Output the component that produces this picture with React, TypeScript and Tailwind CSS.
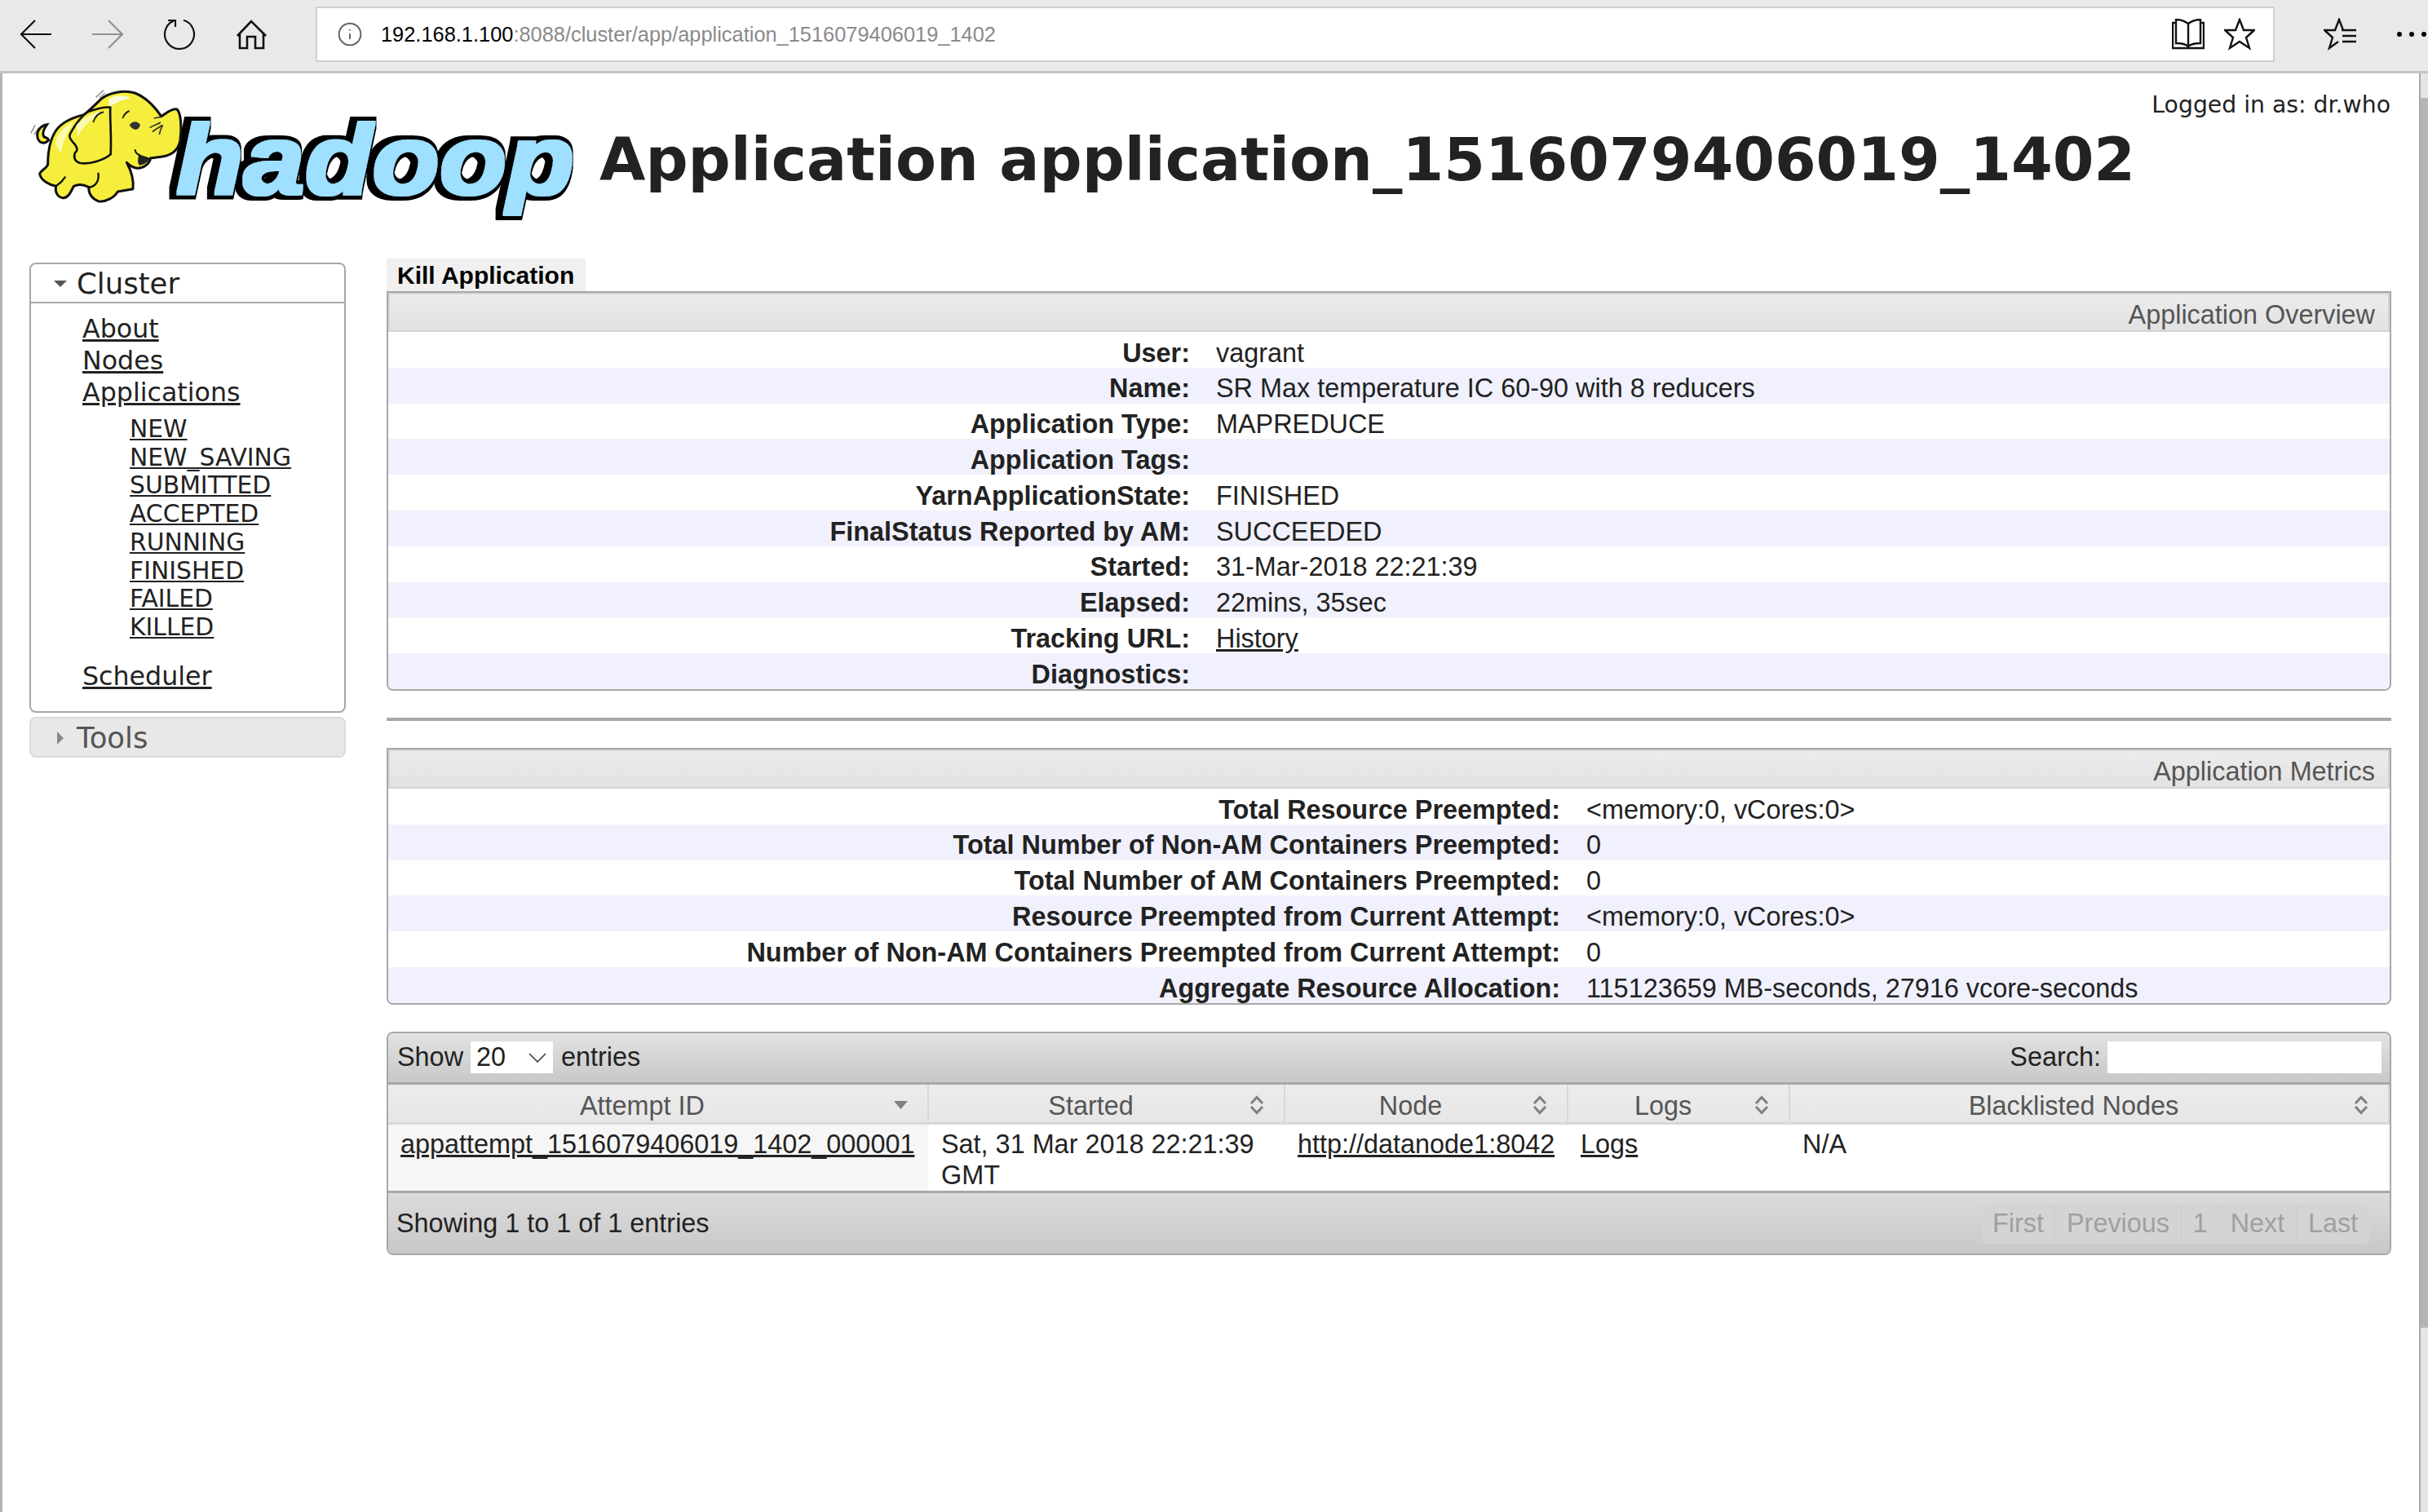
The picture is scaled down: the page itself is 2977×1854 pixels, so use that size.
import { Info } from 'lucide-react';

const overview = [
  ['User:', 'vagrant'],
  ['Name:', 'SR Max temperature IC 60-90 with 8 reducers'],
  ['Application Type:', 'MAPREDUCE'],
  ['Application Tags:', ''],
  ['YarnApplicationState:', 'FINISHED'],
  ['FinalStatus Reported by AM:', 'SUCCEEDED'],
  ['Started:', '31-Mar-2018 22:21:39'],
  ['Elapsed:', '22mins, 35sec'],
  ['Tracking URL:', 'History'],
  ['Diagnostics:', ''],
];

const metrics = [
  ['Total Resource Preempted:', '<memory:0, vCores:0>'],
  ['Total Number of Non-AM Containers Preempted:', '0'],
  ['Total Number of AM Containers Preempted:', '0'],
  ['Resource Preempted from Current Attempt:', '<memory:0, vCores:0>'],
  ['Number of Non-AM Containers Preempted from Current Attempt:', '0'],
  ['Aggregate Resource Allocation:', '115123659 MB-seconds, 27916 vcore-seconds'],
];

const states = ['NEW', 'NEW_SAVING', 'SUBMITTED', 'ACCEPTED', 'RUNNING', 'FINISHED', 'FAILED', 'KILLED'];

const STAR = '19,2 24,15 37,15 27,24 31,37 19,29 7,37 11,24 1,15 14,15';

function HadoopLogo() {
  return (
    <svg width="690" height="170" viewBox="0 0 690 170" className="shrink-0">
      <defs>
        <filter id="wordmark" x="-5%" y="-10%" width="110%" height="120%">
          <feMorphology in="SourceAlpha" operator="dilate" radius="7" result="outer" />
          <feOffset in="outer" dx="-4" dy="0" result="outerShift" />
          <feFlood floodColor="#000000" />
          <feComposite in2="outerShift" operator="in" result="black" />
          <feMorphology in="SourceAlpha" operator="dilate" radius="2" result="inner" />
          <feFlood floodColor="#9fdfff" />
          <feComposite in2="inner" operator="in" result="blue" />
          <feMerge>
            <feMergeNode in="black" />
            <feMergeNode in="blue" />
          </feMerge>
        </filter>
      </defs>
      <text x="186" y="138" fontFamily="Liberation Sans" fontWeight="bold" fontStyle="italic" fontSize="120" textLength="488" lengthAdjust="spacingAndGlyphs" filter="url(#wordmark)">hadoop</text>
      {/* elephant */}
      <g transform="translate(-3 0) scale(0.3333)">
        <path d="M33 190 L48 160 M45 195 L62 170 M272 58 L300 32 M285 60 L305 42" stroke="#999" strokeWidth="5" fill="none" />
        <path d="M98 215 C80 235 58 225 56 198 C56 178 72 160 92 158 C80 175 72 190 80 202 C86 208 94 205 98 215 Z" fill="#f5ee3c" stroke="#111" strokeWidth="9" />
        <path d="M290 65 C320 40 375 30 415 42 C460 60 490 95 512 128 C530 118 550 98 570 102 C585 115 588 170 582 215 C575 258 545 275 500 278 L472 282 C472 300 445 322 420 318 C405 316 395 308 385 298 C400 325 412 360 408 395 L352 405 C340 425 310 445 280 440 C255 430 245 410 245 388 C225 378 205 378 190 385 C180 405 170 430 150 428 C130 425 120 405 125 385 C100 380 70 365 65 340 C70 325 90 320 95 305 C95 260 105 210 125 180 C150 145 195 130 228 122 C250 105 270 85 290 65 Z" fill="#f5ee3c" stroke="#111" strokeWidth="9" strokeLinejoin="round" />
        <path d="M320 62 C345 48 380 48 400 62 C370 65 340 80 320 95 Z" fill="#fbfbd8" />
        <path d="M125 220 C130 190 160 160 190 148 C170 180 150 220 145 260 C130 250 125 240 125 220 Z" fill="#fbfbb0" />
        <path d="M245 110 C275 100 305 92 325 95 C322 130 330 190 326 268 C300 290 250 305 215 300 C195 295 188 280 195 262 C205 255 205 245 195 232 C180 215 170 205 178 190 C195 160 220 125 245 110 Z" fill="#f5ee3c" stroke="#111" strokeWidth="8" strokeLinejoin="round" />
        <path d="M200 160 C230 130 265 112 300 108 C270 125 225 160 205 205 Z" fill="#fbfbb0" />
        <path d="M262 150 C270 125 285 115 300 112 M370 135 C375 122 385 112 395 108" stroke="#222" strokeWidth="6" fill="none" />
        <path d="M395 160 C405 145 425 142 435 160 C430 180 410 185 395 160 Z" fill="#333" />
        <path d="M470 170 C485 160 500 158 510 150 M480 185 C490 175 505 170 515 160 M505 195 C508 180 512 170 518 160 M485 135 L510 130" stroke="#333" strokeWidth="5" fill="none" />
        <path d="M430 268 C426 285 424 300 432 308 C450 305 465 295 472 282 Z" fill="#222" />
        <path d="M415 250 C418 262 425 270 435 270" stroke="#111" strokeWidth="6" fill="none" />
        <path d="M280 335 C285 360 275 385 245 390 M125 385 C140 375 150 365 160 350" stroke="#111" strokeWidth="7" fill="none" />
      </g>
    </svg>
  );
}

export default function App() {
  return (
    <div className="h-[1854px] overflow-hidden bg-white font-['Liberation_Sans',sans-serif] text-[32.4px] text-[#222]">
      {/* BROWSER TOOLBAR */}
      <div className="flex h-[90px] items-center border-b-[3px] border-[#c4c4c4] bg-[#e8eae9] pb-[3px]">
        <div className="flex w-[387px] shrink-0 items-center gap-[44px] pl-[22px]">
          <svg width="44" height="44" viewBox="0 0 44 44" fill="none" stroke="#111" strokeWidth="2.2">
            <path d="M41 22 H4 M21 5 L4 22 L21 39" />
          </svg>
          <svg width="44" height="44" viewBox="0 0 44 44" fill="none" stroke="#909090" strokeWidth="2.2">
            <path d="M3 22 H40 M23 5 L40 22 L23 39" />
          </svg>
          <svg width="44" height="44" viewBox="0 0 44 44" fill="none" stroke="#111" strokeWidth="2.2">
            <path d="M27 4.7 A18 18 0 1 1 15 5.4 M8 5 H17 V13" />
          </svg>
          <svg width="44" height="44" viewBox="0 0 44 44" fill="none" stroke="#111" strokeWidth="2.6">
            <path d="M5 24 L22 6 L40 24 M8 20 V39 H17 V25 H27 V39 H37 V20" />
          </svg>
        </div>
        <div className="flex h-[68px] w-[2402px] shrink-0 items-center border-2 border-[#cfcfcf] bg-white pl-[24px] pr-[22px]">
          <Info size={32} strokeWidth={1.5} className="text-[#666]" />
          <span className="ml-[22px] text-[25.4px] text-black">
            192.168.1.100<span className="text-[#8a8a8a]">:8088/cluster/app/application_1516079406019_1402</span>
          </span>
          <svg className="ml-auto" width="40" height="38" viewBox="0 0 40 38" fill="none" stroke="#111" strokeWidth="2.4">
            <path d="M20 6 C15 2 9 1 5 1 V30 C10 30 16 30 20 34 C24 30 30 30 35 30 V1 C31 1 25 2 20 6 V34 M5 5 H1 V36 H39 V5 H35" />
          </svg>
          <svg className="ml-[24px]" width="38" height="40" viewBox="0 0 38 40" fill="none" stroke="#111" strokeWidth="2.4">
            <polygon points={STAR} />
          </svg>
        </div>
        <svg className="ml-[60px] shrink-0" width="40" height="40" viewBox="0 0 40 40" fill="none" stroke="#111" strokeWidth="2.4">
          <path d="M25 15 H24 L19 2 L14 15 H1 L11 24 L7 37 L18 29 M22 15 H25 M23 22 H40 M23 29 H40 M23 15 H40" />
        </svg>
        <div className="ml-[50px] flex shrink-0 gap-[9px]">
          <span className="h-[6px] w-[6px] rounded-full bg-black" />
          <span className="h-[6px] w-[6px] rounded-full bg-black" />
          <span className="h-[6px] w-[6px] rounded-full bg-black" />
        </div>
      </div>

      <div className="flex h-[1764px] border-l-[3px] border-[#b4b4b4]">
        <div className="relative w-[2963px] shrink-0">
          {/* HEADER */}
          <div className="flex h-[227px] items-start pl-[27px] pt-[10px]">
            <HadoopLogo />
            <h1 className="ml-[15px] mt-[60px] whitespace-nowrap font-['DejaVu_Sans',sans-serif] text-[72.9px] font-bold leading-none text-[#222]">Application application_1516079406019_1402</h1>
          </div>
          <p className="absolute right-[35px] top-[18px] font-['DejaVu_Sans',sans-serif] text-[28.3px]">Logged in as: dr.who</p>

          <div className="flex gap-[50px] pl-[33px] pr-[34px]">
            {/* SIDEBAR */}
            <aside className="w-[388px] shrink-0 pt-[5px] font-['DejaVu_Sans',sans-serif]">
              <div className="h-[552px] rounded-[8px] border-2 border-[#a8a8a8]">
                <div className="flex h-[48px] items-center border-b-2 border-[#a8a8a8] pl-[28px] pt-[2px] text-[35.5px]">
                  <span className="mr-[12px] h-0 w-0 border-x-[8px] border-t-[8px] border-x-transparent border-t-[#555]" />
                  Cluster
                </div>
                <div className="pl-[63px] pt-[12px] text-[31.7px] leading-[39px] underline">
                  <p>About</p>
                  <p>Nodes</p>
                  <p>Applications</p>
                  <ul className="mt-[8px] pl-[58px] text-[29.8px] leading-[34.7px]">
                    {states.map((s) => (
                      <li key={s}>{s}</li>
                    ))}
                  </ul>
                  <p className="mt-[23px]">Scheduler</p>
                </div>
              </div>
              <div className="mt-[5px] flex h-[50px] items-center rounded-[8px] border-2 border-[#dcdcdc] bg-[#e8e8e8] pl-[32px] pt-[2px] text-[35.5px] text-[#555]">
                <span className="mr-[16px] h-0 w-0 border-y-[8px] border-l-[8px] border-y-transparent border-l-[#888]" />
                Tools
              </div>
            </aside>

            <main className="w-[2458px] shrink-0">
              <div className="flex h-[40px] w-[244px] items-center bg-[#f0f0f0] pl-[13px] text-[30px] font-bold text-black">Kill Application</div>
              <Panel title="Application Overview" rows={overview} labelWidth={983} />
              <div className="my-[33px] h-[4px] bg-[#a8a8a8]" />
              <Panel title="Application Metrics" rows={metrics} labelWidth={1437} />

              {/* ATTEMPTS TABLE */}
              <div className="mt-[33px] overflow-hidden rounded-[8px] border-2 border-[#a8a8a8]">
                <div className="flex h-[63px] items-center border-b-[3px] border-[#a8a8a8] bg-gradient-to-b from-[#e2e2e2] to-[#c8c8c8] pl-[11px] pr-[10px]">
                  Show
                  <span className="ml-[9px] mr-[10px] flex h-[39px] w-[101px] items-center justify-between bg-white px-[7px]">
                    20
                    <svg width="24" height="14" viewBox="0 0 24 14">
                      <path d="M2 2 L12 12 L22 2" fill="none" stroke="#333" strokeWidth="1.5" />
                    </svg>
                  </span>
                  entries
                  <span className="ml-auto mr-[8px]">Search:</span>
                  <span className="h-[39px] w-[336px] bg-white" />
                </div>
                <table className="w-full table-fixed border-collapse">
                  <colgroup>
                    <col className="w-[662px]" />
                    <col className="w-[437px]" />
                    <col className="w-[347px]" />
                    <col className="w-[272px]" />
                    <col />
                  </colgroup>
                  <thead>
                    <tr className="h-[48px] bg-gradient-to-b from-[#ececec] to-[#e6e6e6] text-[#555]">
                      {['Attempt ID', 'Started', 'Node', 'Logs', 'Blacklisted Nodes'].map((h, i) => (
                        <th key={h} className="relative border-b-[3px] border-r-2 border-[#d8d8d8] pr-[38px] pt-[5px] font-normal leading-[38px]">
                          {h}
                          <svg className="absolute right-[24px] top-[13px]" width="18" height="24" viewBox="0 0 18 24">
                            {i === 0 ? (
                              <path d="M1 7 H18 L9.5 17 Z" fill="#808080" />
                            ) : (
                              <path d="M2 10 L9 2.5 L16 10 M2 14 L9 21.5 L16 14" fill="none" stroke="#808080" strokeWidth="3" />
                            )}
                          </svg>
                        </th>
                      ))}
                    </tr>
                  </thead>
                  <tbody>
                    <tr className="h-[82px] align-top leading-[38px]">
                      <td className="bg-[#f6f6f6] px-[15px] pt-[5px] underline">appattempt_1516079406019_1402_000001</td>
                      <td className="px-[16px] pt-[5px]">Sat, 31 Mar 2018 22:21:39 GMT</td>
                      <td className="px-[16px] pt-[5px] underline">http://datanode1:8042</td>
                      <td className="px-[16px] pt-[5px] underline">Logs</td>
                      <td className="px-[16px] pt-[5px]">N/A</td>
                    </tr>
                  </tbody>
                </table>
                <div className="flex h-[77px] items-center border-t-[3px] border-[#a8a8a8] bg-gradient-to-b from-[#dcdcdc] to-[#c8c8c8] pl-[10px] pr-[25px]">
                  Showing 1 to 1 of 1 entries
                  <div className="ml-auto flex h-[49px] items-center rounded-[6px] bg-[#d4d4d4] text-[#a0a0a0]">
                    <span className="flex h-full w-[90px] items-center justify-center border-r border-[#ccc]">First</span>
                    <span className="flex h-full w-[155px] items-center justify-center border-r border-[#ccc]">Previous</span>
                    <span className="flex h-full w-[46px] items-center justify-center border-r border-[#ccc]">1</span>
                    <span className="flex h-full w-[95px] items-center justify-center border-r border-[#ccc]">Next</span>
                    <span className="flex h-full w-[89px] items-center justify-center">Last</span>
                  </div>
                </div>
              </div>
            </main>
          </div>
        </div>

        {/* SCROLLBAR */}
        <div className="w-[11px] shrink-0 border-l-2 border-[#aaaaaa] bg-[#e5e5e5]">
          <div className="mt-[30px] h-[1508px] bg-[#b5b5b5]" />
        </div>
      </div>
    </div>
  );
}

function Panel({ title, rows, labelWidth }: { title: string; rows: string[][]; labelWidth: number }) {
  return (
    <div className="overflow-hidden rounded-b-[8px] border-2 border-[#a8a8a8]">
      <div className="flex h-[48px] items-center justify-end border-2 border-[#d4d4d4] bg-gradient-to-b from-[#ececec] to-[#e2e2e2] pr-[16px] pt-[6px] text-[#555]">{title}</div>
      {rows.map(([k, v], i) => (
        <div key={k} className={i % 2 === 1 ? 'flex h-[43.8px] items-center bg-[#f0f1fc] pt-[8px]' : 'flex h-[43.8px] items-center bg-white pt-[8px]'}>
          <b className="shrink-0 text-right" style={{ width: labelWidth }}>{k}</b>
          <span className={v === 'History' ? 'ml-[32px] underline' : 'ml-[32px]'}>{v}</span>
        </div>
      ))}
    </div>
  );
}
